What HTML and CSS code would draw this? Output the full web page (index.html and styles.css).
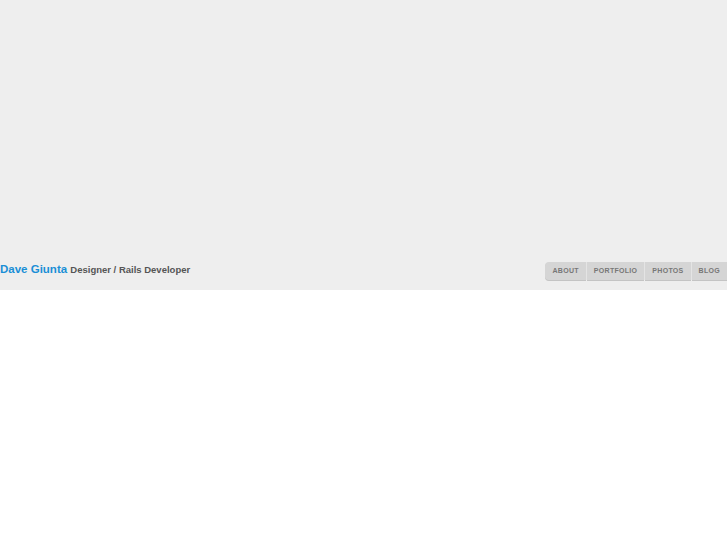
FILE: index.html
```html
<!DOCTYPE html>
<html lang="en">
<head>
    <meta charset="UTF-8">
    <title>Dave Giunta</title>
    <link rel="stylesheet" href="styles.css">
</head>
<body>
    <div class="header">
        <div class="bar">
            <h1><a href="#">Dave Giunta</a> <span>Designer / Rails Developer</span></h1>
            <ul class="nav">
                <li><a href="#">About</a></li>
                <li><a href="#">Portfolio</a></li>
                <li><a href="#">Photos</a></li>
                <li><a href="#">Blog</a></li>
            </ul>
        </div>
    </div>
</body>
</html>
```

FILE: styles.css
```css
* {
    margin: 0;
    padding: 0;
}

ul {
    list-style: none;
}

a {
    text-decoration: none;
}

body {
    background: #fff;
    font-family: "Liberation Sans", Arial, sans-serif;
}

.header {
    height: 290px;
    background: #eee;
    display: flex;
    align-items: flex-end;
}

.bar {
    width: 100%;
    height: 29px;
    display: flex;
    justify-content: space-between;
}

h1 {
    font-size: 11.5px;
    font-weight: bold;
    line-height: 14px;
    padding-top: 1px;
}

h1 a {
    color: #1a8fd6;
}

h1 span {
    font-size: 9.5px;
    color: #555;
}

.nav {
    display: flex;
    height: 18px;
    margin-top: 1px;
}

.nav li {
    border-left: 1px solid #e4e4e4;
}

.nav li:first-child {
    border-left: none;
}

.nav a {
    display: block;
    height: 18px;
    line-height: 18px;
    padding: 0 7px;
    background: #d5d5d5;
    box-shadow: 0 1px 0 #c4c4c4;
    color: #777;
    font-size: 7px;
    font-weight: bold;
    text-transform: uppercase;
    letter-spacing: 0.3px;
}

.nav li:first-child a {
    border-radius: 4px 0 0 4px;
}
```
